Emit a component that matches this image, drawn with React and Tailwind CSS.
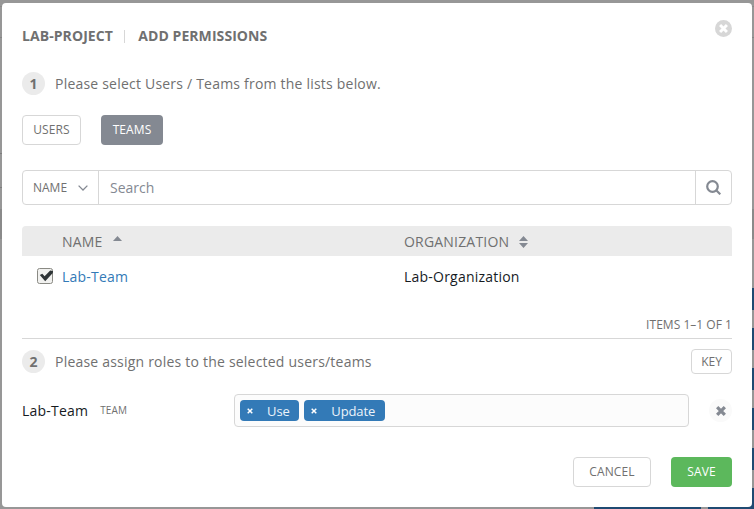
import React from "react";

const XMark = ({ className, weight = 3.6 }) => (
  <svg className={className} viewBox="0 0 11 11" fill="none" stroke="currentColor" strokeWidth={weight}>
    <path d="M1.3 1.3 L9.7 9.7 M9.7 1.3 L1.3 9.7" />
  </svg>
);

function Step({ number, children }) {
  return (
    <div className="flex items-center">
      <span className="flex h-[23px] w-[23px] items-center justify-center rounded-full bg-[#ebebeb] text-[14px] leading-[20px] font-bold">
        {number}
      </span>
      <span className="ml-[10px] text-[14px] leading-[20px] tracking-[0.21px]">{children}</span>
    </div>
  );
}

function Backdrop() {
  return (
    <div className="absolute inset-0 overflow-hidden bg-[#979797]">
      <div className="absolute inset-x-0 top-[6px] h-px bg-[#8b8b8b]" />
      <div className="absolute inset-x-0 top-[37px] h-px bg-[#858585]" />
      <div className="absolute left-0 top-[153px] h-px w-[2px] bg-[#7d7d7d]" />
      <div className="absolute left-0 top-[187px] h-px w-[2px] bg-[#7d7d7d]" />
      <div className="absolute inset-x-0 top-[209px] h-[30px] bg-[#8a8a8a]" />
      <div className="absolute right-0 top-[288px] flex w-[10px] flex-col gap-[18px]">
        {[1, 2, 3, 4, 5, 6].map((n) => (
          <div key={n} className="h-[22px] bg-[#1f4a72]" />
        ))}
      </div>
      <div className="absolute bottom-0 left-[594px] h-[8px] w-[107px] bg-[#1f4a72]" />
      <div className="absolute bottom-0 left-[708px] h-[8px] w-[46px] bg-[#1f4a72]" />
    </div>
  );
}

function Tag({ children }) {
  return (
    <span className="flex h-[21px] items-center rounded-[4px] bg-[#337ab7] pr-[9.6px] pl-[7px] text-[13px] tracking-[-0.1px] text-[#ebf3fa]">
      <XMark className="mt-px mr-[14px] h-[6px] w-[6px] text-white" weight={2.7} />
      <span className="leading-[18px]">{children}</span>
    </span>
  );
}

export default function App() {
  return (
    <div className="relative h-[509px] w-[754px] px-[2px] pt-[3px] pb-[2px] font-['Open_Sans','Noto_Sans',sans-serif] text-[#707070]">
      <Backdrop />
      <div className="relative flex h-full flex-col rounded-[4px] bg-white px-[20px]">
        <div className="flex h-[69px] items-start justify-between">
          <div className="flex items-center pt-[23px] text-[14px] leading-[20px] font-bold tracking-[0.07px]">
            <span>LAB-PROJECT</span>
            <span className="mr-[13px] ml-[11.3px] h-[13px] w-px bg-[#d7d7d7]" />
            <span>ADD PERMISSIONS</span>
          </div>
          <span className="mt-[17px] flex h-[17px] w-[17px] items-center justify-center rounded-full bg-[#d7d7d7]">
            <XMark className="h-[9px] w-[9px] text-white" />
          </span>
        </div>

        <Step number="1">Please select Users / Teams from the lists below.</Step>

        <div className="mt-[20px] flex gap-[20px] text-[12px] leading-[17px]">
          <button className="h-[30px] w-[59px] rounded-[4px] border border-[#d7d7d7] pb-[2px] tracking-[0.1px]">USERS</button>
          <button className="h-[30px] w-[62px] rounded-[4px] bg-[#848992] pb-[2px] tracking-[0.1px] text-white">TEAMS</button>
        </div>

        <div className="mt-[25px] flex h-[35px] shrink-0 rounded-[4px] border border-[#d7d7d7]">
          <div className="flex w-[76px] items-center border-r border-[#d7d7d7] pl-[10px] text-[12px]">
            NAME
            <svg className="ml-[11px] h-[6px] w-[10px]" viewBox="0 0 10 6" fill="none" stroke="#848992" strokeWidth="1.3">
              <path d="M0.6 0.6 L5 5 L9.4 0.6" />
            </svg>
          </div>
          <div className="flex flex-1 items-center pl-[11px] text-[14px] text-[#848992]">Search</div>
          <div className="flex w-[36px] items-center justify-center border-l border-[#d7d7d7]">
            <svg className="h-[15px] w-[15px]" viewBox="0 0 15 15" fill="none" stroke="#848992" strokeWidth="2.2">
              <circle cx="6.5" cy="6.5" r="5.3" />
              <path d="M10.2 10.2 L14.3 14.3" />
            </svg>
          </div>
        </div>

        <div className="mt-[21px] grid h-[30px] shrink-0 grid-cols-[382px_1fr] items-center rounded-t-[4px] bg-[#ebebeb] text-[14px] leading-[20px] tracking-[0.19px]">
          <div className="flex items-center pt-px pl-[40px]">
            NAME
            <svg className="mb-[7px] ml-[10px] h-[5px] w-[9px]" viewBox="0 0 9 5" fill="#848992">
              <path d="M0 5 L4.5 0 L9 5 Z" />
            </svg>
          </div>
          <div className="flex items-center pt-px">
            ORGANIZATION
            <svg className="ml-[9.5px] h-[12px] w-[9px]" viewBox="0 0 9 12" fill="#848992">
              <path d="M0 5 L4.5 0 L9 5 Z M0 7 L4.5 12 L9 7 Z" />
            </svg>
          </div>
        </div>
        <div className="grid h-[42px] shrink-0 grid-cols-[382px_1fr] items-center text-[14px] leading-[20px] tracking-[0.22px] text-[#161b1f]">
          <div className="flex items-center pl-[15px] text-[#337ab7]">
            <svg className="mr-[9px] mb-[2px] h-[16px] w-[16px]" viewBox="0 0 16 16" fill="none">
              <rect x="0.5" y="0.5" width="15" height="15" rx="2" fill="#f1f1ef" stroke="#8a8a84" />
              <path d="M2.8 7 L5.3 5.8 L7.6 8.2 L13.2 2.6 L16 3 L15.8 5 L8.2 13.2 Z" fill="#2e3436" />
            </svg>
            Lab-Team
          </div>
          <div>Lab-Organization</div>
        </div>

        <div className="flex h-[41px] shrink-0 items-end justify-end border-b border-[#d7d7d7] pb-[5px] text-[12px] leading-[17px] tracking-[0.03px]">
          ITEMS 1–1 OF 1
        </div>

        <div className="mt-[10px] flex items-center justify-between">
          <Step number="2">Please assign roles to the selected users/teams</Step>
          <button className="h-[25px] w-[41px] rounded-[4px] border border-[#d7d7d7] text-[12px] leading-[17px]">KEY</button>
        </div>

        <div className="mt-[20px] flex h-[33px] shrink-0 items-center">
          <div className="flex w-[212px] items-center">
            <span className="text-[14px] leading-[20px] tracking-[0.22px] text-[#161b1f]">Lab-Team</span>
            <span className="mb-px ml-[12px] text-[10px] leading-[14px] tracking-[0.1px]">TEAM</span>
          </div>
          <div className="flex h-[33px] w-[455px] items-center gap-[5px] rounded-[4px] border border-[#d7d7d7] bg-[#fcfcfc] pl-[5px]">
            <Tag>Use</Tag>
            <Tag>Update</Tag>
          </div>
          <span className="ml-auto flex h-[23px] w-[23px] items-center justify-center rounded-full bg-[#fafafa]">
            <XMark className="h-[10px] w-[10px] text-[#848992]" />
          </span>
        </div>

        <div className="mt-[30px] flex justify-end gap-[20px] text-[12px] leading-[17px]">
          <button className="h-[30px] w-[78px] rounded-[4px] border border-[#d7d7d7] pb-[2px] tracking-[0.15px]">CANCEL</button>
          <button className="h-[30px] w-[61px] rounded-[4px] bg-[#5cb85c] pb-[2px] tracking-[0.15px] text-white">SAVE</button>
        </div>
      </div>
    </div>
  );
}
